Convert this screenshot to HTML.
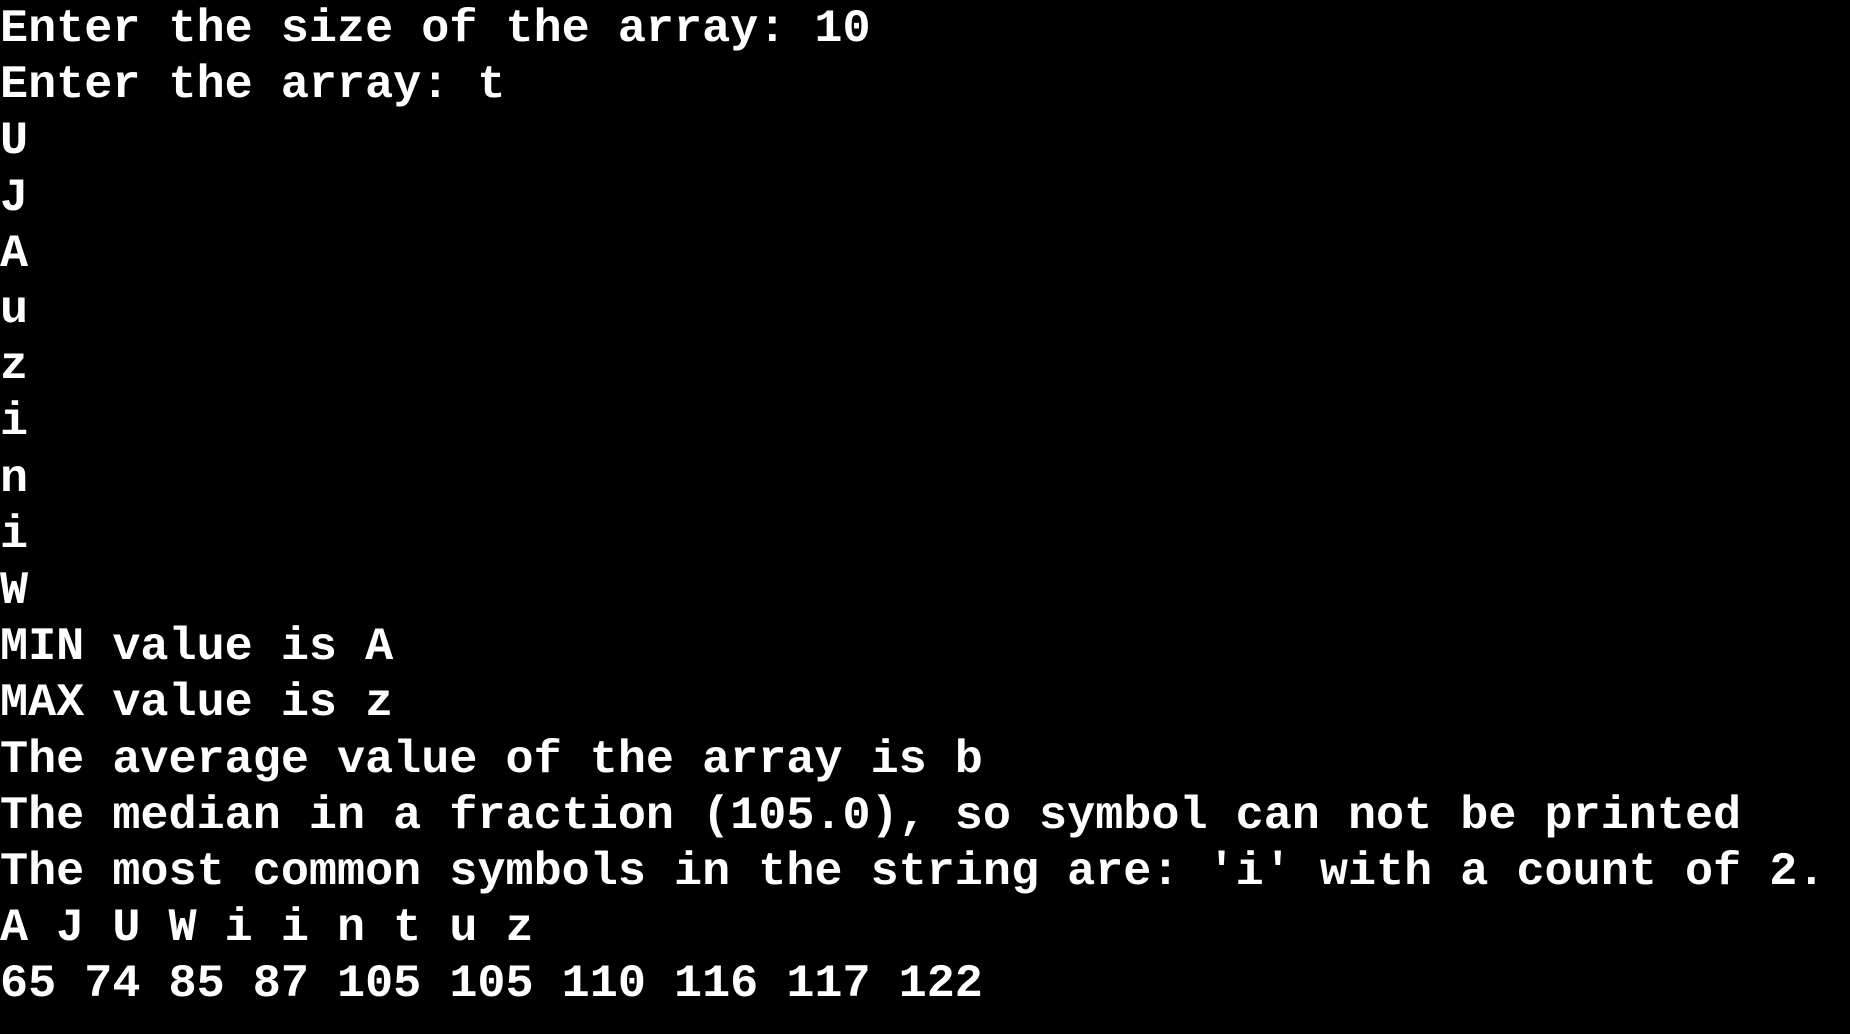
<!DOCTYPE html>
<html><head><meta charset="utf-8"><style>
html,body{margin:0;padding:0;background:#000;width:1850px;height:1034px;overflow:hidden}
pre{margin:0;padding:0;position:absolute;left:0;top:2px;color:#fff;font-family:"Liberation Mono",monospace;font-weight:bold;font-size:46.8px;line-height:56.2px;white-space:pre}
</style></head><body><pre>Enter the size of the array: 10
Enter the array: t
U
J
A
u
z
i
n
i
W
MIN value is A
MAX value is z
The average value of the array is b
The median in a fraction (105.0), so symbol can not be printed
The most common symbols in the string are: 'i' with a count of 2.
A J U W i i n t u z
65 74 85 87 105 105 110 116 117 122</pre></body></html>
